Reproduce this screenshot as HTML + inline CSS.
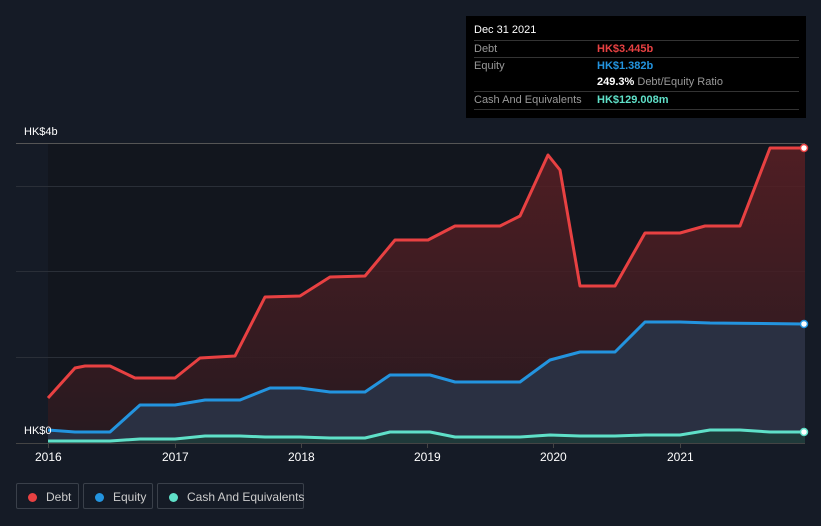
<!DOCTYPE html><html><head><style>
body{margin:0;width:821px;height:526px;background:#151b26;font-family:"Liberation Sans",sans-serif;overflow:hidden;position:relative}
.tt{position:absolute;left:466px;top:16px;width:340px;height:102px;background:#000;font-size:11px;color:#999}
.tt .r{position:absolute;left:8px;width:325px;border-top:1px solid #333;height:17px;line-height:17px}
.tt .v{position:absolute;left:123px;font-weight:bold}
.lg{position:absolute;top:483px;height:26px;border:1px solid #3a404a;border-radius:2px;color:#ccc;font-size:12px;line-height:26px;box-sizing:border-box;white-space:nowrap}
.lg i{display:inline-block;width:9px;height:9px;border-radius:50%;margin:0 9px 0 11px;vertical-align:-1px}
.ax{position:absolute;top:450px;color:#fff;font-size:12px}
</style></head><body>
<svg width="821" height="526" style="position:absolute;left:0;top:0">
<rect x="48" y="143" width="757" height="300" fill="#12161e"/>
<g stroke="#2a2f38" stroke-width="1"><line x1="16" y1="143.5" x2="805" y2="143.5" stroke="#555"/><line x1="16" y1="186.5" x2="805" y2="186.5"/><line x1="16" y1="271.5" x2="805" y2="271.5"/><line x1="16" y1="357.5" x2="805" y2="357.5"/></g>
<defs><linearGradient id="gd" x1="0" y1="0" x2="0" y2="1"><stop offset="0" stop-color="#5a1f24"/><stop offset="1" stop-color="#2a1a20"/></linearGradient></defs>
<path d="M48,398 L75,368 L85,366 L110,366 L135,378 L175,378 L200,358 L235,356 L265,297 L300,296 L330,277 L365,276 L395,240 L428,240 L455,226 L500,226 L520,216 L548,155 L560,170 L580,286 L615,286 L645,233 L680,233 L705,226 L740,226 L770,148 L805,148 L805,443 L48,443Z" fill="url(#gd)" opacity="0.85"/>
<path d="M48,430 L75,432 L110,432 L140,405 L175,405 L205,400 L240,400 L270,388 L300,388 L330,392 L365,392 L390,375 L430,375 L455,382 L520,382 L550,360 L580,352 L615,352 L645,322 L680,322 L710,323 L805,324 L805,443 L48,443Z" fill="#2a3042"/>
<path d="M48,441 L110,441 L140,439 L175,439 L205,436 L240,436 L265,437 L300,437 L330,438 L365,438 L390,432 L430,432 L455,437 L520,437 L550,435 L580,436 L615,436 L645,435 L680,435 L710,430 L740,430 L770,432 L805,432 L805,443 L48,443Z" fill="#1f3a3a"/>
<g fill="none" stroke-width="3" stroke-linejoin="round">
<path d="M48,398 L75,368 L85,366 L110,366 L135,378 L175,378 L200,358 L235,356 L265,297 L300,296 L330,277 L365,276 L395,240 L428,240 L455,226 L500,226 L520,216 L548,155 L560,170 L580,286 L615,286 L645,233 L680,233 L705,226 L740,226 L770,148 L805,148" stroke="#e84142"/>
<path d="M48,430 L75,432 L110,432 L140,405 L175,405 L205,400 L240,400 L270,388 L300,388 L330,392 L365,392 L390,375 L430,375 L455,382 L520,382 L550,360 L580,352 L615,352 L645,322 L680,322 L710,323 L805,324" stroke="#2394df"/>
<path d="M48,441 L110,441 L140,439 L175,439 L205,436 L240,436 L265,437 L300,437 L330,438 L365,438 L390,432 L430,432 L455,437 L520,437 L550,435 L580,436 L615,436 L645,435 L680,435 L710,430 L740,430 L770,432 L805,432" stroke="#5fe0c8"/>
</g>
<line x1="16" y1="443.5" x2="805" y2="443.5" stroke="#444"/>
<g stroke="#444"><line x1="48.5" y1="443" x2="48.5" y2="448"/><line x1="175.5" y1="443" x2="175.5" y2="448"/><line x1="301.5" y1="443" x2="301.5" y2="448"/><line x1="427.5" y1="443" x2="427.5" y2="448"/><line x1="553.5" y1="443" x2="553.5" y2="448"/><line x1="680.5" y1="443" x2="680.5" y2="448"/></g>
<circle cx="804" cy="148" r="3.5" fill="#fff" stroke="#e84142" stroke-width="1.5"/>
<circle cx="804" cy="324" r="3.5" fill="#fff" stroke="#2394df" stroke-width="1.5"/>
<circle cx="804" cy="432" r="3.5" fill="#fff" stroke="#5fe0c8" stroke-width="1.5"/>
</svg>
<div style="position:absolute;left:24px;top:126px;color:#fff;font-size:11px">HK$4b</div>
<div style="position:absolute;left:24px;top:425px;color:#fff;font-size:11px">HK$0</div>
<div class="ax" style="left:35px">2016</div><div class="ax" style="left:162px">2017</div><div class="ax" style="left:288px">2018</div><div class="ax" style="left:414px">2019</div><div class="ax" style="left:540px">2020</div><div class="ax" style="left:667px">2021</div>
<div class="tt">
<div style="position:absolute;left:8px;top:8px;color:#fff">Dec 31 2021</div>
<div class="r" style="top:24px">Debt<span class="v" style="color:#e84142">HK$3.445b</span></div>
<div class="r" style="top:41px">Equity<span class="v" style="color:#2394df">HK$1.382b</span></div>
<div class="r" style="top:58px;border-top:none"><span class="v" style="color:#fff">249.3% <span style="color:#999;font-weight:normal">Debt/Equity Ratio</span></span></div>
<div class="r" style="top:75px;border-bottom:1px solid #333">Cash And Equivalents<span class="v" style="color:#5fe0c8">HK$129.008m</span></div>
</div>
<div class="lg" style="left:16px;width:63px"><i style="background:#e84142"></i>Debt</div>
<div class="lg" style="left:83px;width:70px"><i style="background:#2394df"></i>Equity</div>
<div class="lg" style="left:157px;width:147px"><i style="background:#5fe0c8"></i>Cash And Equivalents</div>
</body></html>
